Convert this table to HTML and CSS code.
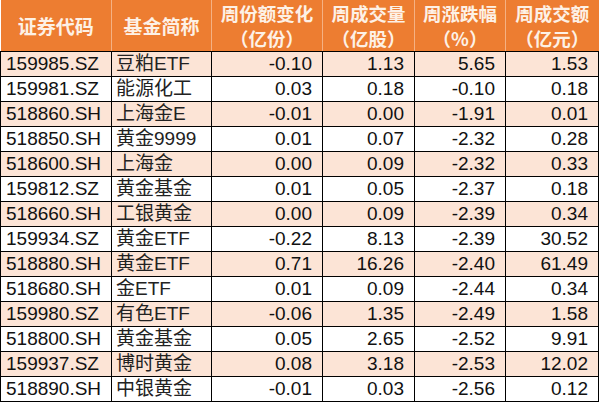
FILE: index.html
```html
<!DOCTYPE html>
<html lang="zh">
<head>
<meta charset="utf-8">
<link rel="stylesheet" href="styles.css">
</head>
<body>
<table class="etf">
  <colgroup>
    <col class="c-code"><col class="c-name"><col class="c-chg"><col class="c-vol"><col class="c-pct"><col class="c-amt">
  </colgroup>
  <thead>
    <tr>
      <th>证券代码</th>
      <th>基金简称</th>
      <th><span class="hl">周份额变化</span><span class="hl">（亿份）</span></th>
      <th><span class="hl">周成交量</span><span class="hl">（亿股）</span></th>
      <th><span class="hl">周涨跌幅</span><span class="hl">（%）</span></th>
      <th><span class="hl">周成交额</span><span class="hl">（亿元）</span></th>
    </tr>
  </thead>
  <tbody>
    <tr class="alt"><td class="code">159985.SZ</td><td class="name">豆粕ETF</td><td class="num">-0.10</td><td class="num">1.13</td><td class="num">5.65</td><td class="num">1.53</td></tr>
    <tr><td class="code">159981.SZ</td><td class="name">能源化工</td><td class="num">0.03</td><td class="num">0.18</td><td class="num">-0.10</td><td class="num">0.18</td></tr>
    <tr class="alt"><td class="code">518860.SH</td><td class="name">上海金E</td><td class="num">-0.01</td><td class="num">0.00</td><td class="num">-1.91</td><td class="num">0.01</td></tr>
    <tr><td class="code">518850.SH</td><td class="name">黄金9999</td><td class="num">0.01</td><td class="num">0.07</td><td class="num">-2.32</td><td class="num">0.28</td></tr>
    <tr class="alt"><td class="code">518600.SH</td><td class="name">上海金</td><td class="num">0.00</td><td class="num">0.09</td><td class="num">-2.32</td><td class="num">0.33</td></tr>
    <tr><td class="code">159812.SZ</td><td class="name">黄金基金</td><td class="num">0.01</td><td class="num">0.05</td><td class="num">-2.37</td><td class="num">0.18</td></tr>
    <tr class="alt"><td class="code">518660.SH</td><td class="name">工银黄金</td><td class="num">0.00</td><td class="num">0.09</td><td class="num">-2.39</td><td class="num">0.34</td></tr>
    <tr><td class="code">159934.SZ</td><td class="name">黄金ETF</td><td class="num">-0.22</td><td class="num">8.13</td><td class="num">-2.39</td><td class="num">30.52</td></tr>
    <tr class="alt"><td class="code">518880.SH</td><td class="name">黄金ETF</td><td class="num">0.71</td><td class="num">16.26</td><td class="num">-2.40</td><td class="num">61.49</td></tr>
    <tr><td class="code">518680.SH</td><td class="name">金ETF</td><td class="num">0.01</td><td class="num">0.09</td><td class="num">-2.44</td><td class="num">0.34</td></tr>
    <tr class="alt"><td class="code">159980.SZ</td><td class="name">有色ETF</td><td class="num">-0.06</td><td class="num">1.35</td><td class="num">-2.49</td><td class="num">1.58</td></tr>
    <tr><td class="code">518800.SH</td><td class="name">黄金基金</td><td class="num">0.05</td><td class="num">2.65</td><td class="num">-2.52</td><td class="num">9.91</td></tr>
    <tr class="alt"><td class="code">159937.SZ</td><td class="name">博时黄金</td><td class="num">0.08</td><td class="num">3.18</td><td class="num">-2.53</td><td class="num">12.02</td></tr>
    <tr><td class="code">518890.SH</td><td class="name">中银黄金</td><td class="num">-0.01</td><td class="num">0.03</td><td class="num">-2.56</td><td class="num">0.12</td></tr>
  </tbody>
</table>
</body>
</html>
```

FILE: styles.css
```css
html, body {
  margin: 0;
  padding: 0;
  background: #ffffff;
}

.etf {
  border-collapse: collapse;
  table-layout: fixed;
  width: 598px;
  font-family: "Liberation Sans", "Noto Sans CJK SC", sans-serif;
  font-size: 19px;
  color: #111111;
}

.c-code { width: 111px; }
.c-name { width: 100px; }
.c-chg  { width: 111px; }
.c-vol  { width: 92px; }
.c-pct  { width: 91px; }
.c-amt  { width: 93px; }

.etf th {
  background: #ed7d31;
  color: #fdf1e6;
  font-family: "Noto Sans CJK SC", sans-serif;
  font-weight: 700;
  font-size: 19px;
  line-height: 25px;
  height: 51px;
  padding: 0;
  text-align: center;
  vertical-align: middle;
  border-left: 1px solid #f5b183;
  border-bottom: 1px solid #000000;
}

.etf th .hl {
  display: block;
  height: 25px;
  line-height: 25px;
  font-size: 18.5px;
}

.etf th:first-child {
  border-left: none;
}

.etf td {
  height: 24px;
  padding: 0;
  line-height: 24px;
  border: 1px solid #000000;
  white-space: nowrap;
  overflow: hidden;
}

.etf tr.alt td {
  background: #fce4d6;
}

.code {
  padding-left: 5px !important;
  text-align: left;
}

.name {
  padding-left: 4px !important;
  text-align: left;
  color: #222222;
}

.num {
  padding-right: 10px !important;
  text-align: right;
}
```
